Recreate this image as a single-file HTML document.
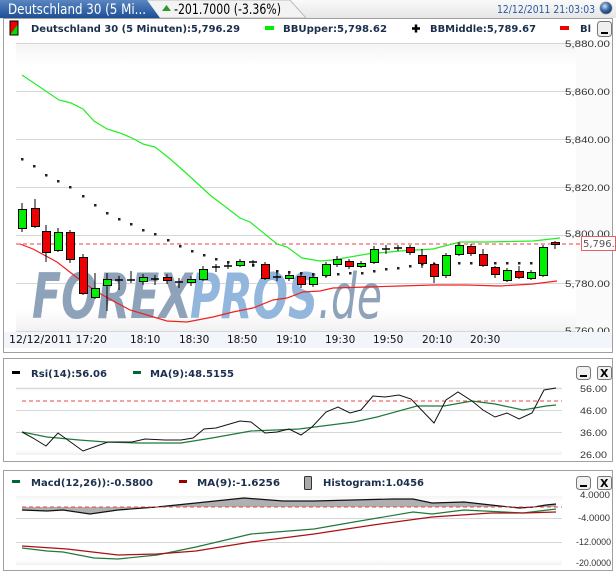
<!DOCTYPE html>
<html><head><meta charset="utf-8"><style>
html,body{margin:0;padding:0;background:#fff;}
svg{display:block;}
text{font-family:"DejaVu Sans","Liberation Sans",sans-serif;}
.lg{font-size:10px;font-weight:bold;fill:#1b2f4d;}
.ax{font-family:"Liberation Sans",sans-serif;font-size:9px;fill:#333;}
.tm{font-family:"DejaVu Sans",sans-serif;font-size:10.5px;fill:#111;}
</style></head><body>
<svg width="616" height="573" viewBox="0 0 616 573" xmlns="http://www.w3.org/2000/svg">
<defs>
<linearGradient id="tab" x1="0" y1="0" x2="0" y2="1"><stop offset="0" stop-color="#5a86c0"/><stop offset="1" stop-color="#1d4f95"/></linearGradient>
<linearGradient id="hdr" x1="0" y1="0" x2="0" y2="1"><stop offset="0" stop-color="#fafafa"/><stop offset="1" stop-color="#e6e6e6"/></linearGradient>
<linearGradient id="plot" x1="0" y1="0" x2="0" y2="1"><stop offset="0" stop-color="#f4f4f4"/><stop offset="0.08" stop-color="#fff"/><stop offset="0.92" stop-color="#fff"/><stop offset="1" stop-color="#f1f1f1"/></linearGradient>
<radialGradient id="glb" cx="0.4" cy="0.35" r="0.6"><stop offset="0" stop-color="#cfe0f5"/><stop offset="0.6" stop-color="#3c6db0"/><stop offset="1" stop-color="#1c3f75"/></radialGradient>
</defs>
<!-- header -->
<rect x="0" y="0" width="616" height="18" fill="url(#hdr)"/>
<path d="M0 0 H290 L306 18 H0Z" fill="#f3f3f3" stroke="#bbb"/>
<path d="M0 0 H147 L160 18 H0Z" fill="url(#tab)"/>
<text x="8" y="14" font-family="Liberation Sans" font-size="14" fill="#fff" textLength="138" lengthAdjust="spacingAndGlyphs">Deutschland 30 (5 Mi...</text>
<path d="M162 11 L166.5 5 L171 11Z" fill="#2a9a2a"/>
<text x="174" y="14" font-family="Liberation Sans" font-size="14" fill="#000" textLength="107" lengthAdjust="spacingAndGlyphs">-201.7000 (-3.36%)</text>
<text x="497" y="13" font-family="Liberation Sans" font-size="11" fill="#2a5aa0" textLength="98" lengthAdjust="spacingAndGlyphs">12/12/2011 21:03:03</text>
<circle cx="606" cy="8" r="6" fill="url(#glb)" stroke="#888" stroke-width="0.7"/>
<!-- main panel -->
<rect x="3.5" y="18.5" width="609" height="334" fill="#fff" stroke="#a0a0a0"/>
<rect x="10" y="21" width="8" height="14" fill="#00dd00" stroke="#000"/>
<path d="M10 21 H18 V24 L10 35Z" fill="#ee0000"/>
<rect x="10" y="21" width="8" height="14" fill="none" stroke="#000"/>
<text x="31" y="32" class="lg" textLength="209" lengthAdjust="spacingAndGlyphs">Deutschland 30 (5 Minuten):5,796.29</text>
<rect x="265" y="26" width="9" height="4" fill="#00ee00"/>
<text x="283" y="32" class="lg" textLength="104" lengthAdjust="spacingAndGlyphs">BBUpper:5,798.62</text>
<path d="M412 28.5 H420 M416 24.5 V32.5" stroke="#000" stroke-width="2.5"/>
<text x="430" y="32" class="lg" textLength="106" lengthAdjust="spacingAndGlyphs">BBMiddle:5,789.67</text>
<rect x="560" y="26" width="9" height="4" fill="#ee0000"/>
<text x="580" y="32" class="lg">Bl</text>
<rect x="597.5" y="21.5" width="14" height="15" rx="3" fill="#f0f0f0" stroke="#777"/>
<rect x="601" y="32" width="7" height="2" fill="#000"/>
<!-- plot area -->
<rect x="16" y="43" width="560" height="289" fill="url(#plot)"/>
<rect x="576" y="40" width="36" height="292" fill="#fafafa"/>
<g stroke="#d6d6d6" stroke-width="1">
<path d="M16 43.5H576M16 91.5H576M16 139.5H576M16 187.5H576M16 235.5H576M16 283.5H576M16 331.5H576"/>
</g>
<g class="ax">
<text x="565" y="47" textLength="45" lengthAdjust="spacingAndGlyphs" class="ax">5,880.00</text>
<text x="565" y="95" textLength="45" lengthAdjust="spacingAndGlyphs" class="ax">5,860.00</text>
<text x="565" y="143" textLength="45" lengthAdjust="spacingAndGlyphs" class="ax">5,840.00</text>
<text x="565" y="191" textLength="45" lengthAdjust="spacingAndGlyphs" class="ax">5,820.00</text>
<text x="565" y="237" textLength="45" lengthAdjust="spacingAndGlyphs" class="ax">5,800.00</text>
<text x="565" y="287" textLength="45" lengthAdjust="spacingAndGlyphs" class="ax">5,780.00</text>
<text x="565" y="334" textLength="45" lengthAdjust="spacingAndGlyphs" class="ax">5,760.00</text>
</g>
<!-- watermark -->
<g font-family="Liberation Sans" font-weight="bold" font-style="italic" font-size="62">
<text x="32" y="318" fill="#8ea2ba" textLength="160" lengthAdjust="spacingAndGlyphs">FOREX</text>
<text x="190" y="318" fill="#93b6dc" textLength="128" lengthAdjust="spacingAndGlyphs">PROS</text>
<text x="318" y="318" fill="#8ea2ba" font-weight="normal" textLength="64" lengthAdjust="spacingAndGlyphs">.de</text>
</g>
<!-- dashed current price -->
<path d="M16 244H581" stroke="#f04040" stroke-width="1" stroke-dasharray="4,3"/>
<rect x="581.5" y="236.5" width="34" height="14" fill="#fff" stroke="#e86060"/>
<text x="583" y="247" font-family="Liberation Sans" font-size="10" fill="#555">5,796.29</text>
<!-- bands -->
<polyline fill="none" stroke="#22ee22" stroke-width="1.2" points="22,75 59,100 71,103 83,109 94,121 107,129 120,133 132,138 143,144 155,147 169,158 185,172 210,195 240,218 250,222 277,244 287,247 302,258 320,261 333,260 367,254 400,251 433,249 460,242 487,242 533,241 560,238"/>
<polyline fill="none" stroke="#ee2222" stroke-width="1.2" points="20,244 33,249 57,262 80,280 97,292 130,310 147,315 167,321 187,322 213,317 233,312 253,308 273,300 287,298 303,292 320,291 333,288 367,287 400,286 433,285 467,285 500,286 533,284 557,281"/>
<!-- middle dots -->
<g fill="#222">
<rect x="21" y="158" width="2.5" height="2.5"/><rect x="33" y="165" width="2.5" height="2.5"/><rect x="45" y="174" width="2.5" height="2.5"/><rect x="57" y="180" width="2.5" height="2.5"/><rect x="69" y="186" width="2.5" height="2.5"/>
<rect x="82" y="195" width="2.5" height="2.5"/><rect x="94" y="204" width="2.5" height="2.5"/><rect x="106" y="212" width="2.5" height="2.5"/><rect x="118" y="218" width="2.5" height="2.5"/><rect x="130" y="223" width="2.5" height="2.5"/>
<rect x="142" y="229" width="2.5" height="2.5"/><rect x="154" y="233" width="2.5" height="2.5"/><rect x="167" y="239" width="2.5" height="2.5"/><rect x="179" y="245" width="2.5" height="2.5"/><rect x="191" y="250" width="2.5" height="2.5"/>
<rect x="203" y="254" width="2.5" height="2.5"/><rect x="215" y="258" width="2.5" height="2.5"/><rect x="227" y="261" width="2.5" height="2.5"/><rect x="240" y="262" width="2.5" height="2.5"/><rect x="252" y="264" width="2.5" height="2.5"/>
<rect x="264" y="268" width="2.5" height="2.5"/><rect x="276" y="270" width="2.5" height="2.5"/><rect x="288" y="271" width="2.5" height="2.5"/><rect x="300" y="272" width="2.5" height="2.5"/><rect x="312" y="273" width="2.5" height="2.5"/>
<rect x="325" y="274" width="2.5" height="2.5"/><rect x="337" y="273" width="2.5" height="2.5"/><rect x="349" y="272" width="2.5" height="2.5"/><rect x="361" y="272" width="2.5" height="2.5"/><rect x="373" y="270" width="2.5" height="2.5"/>
<rect x="385" y="268" width="2.5" height="2.5"/><rect x="397" y="267" width="2.5" height="2.5"/><rect x="409" y="265" width="2.5" height="2.5"/><rect x="421" y="263" width="2.5" height="2.5"/><rect x="433" y="263" width="2.5" height="2.5"/>
<rect x="445" y="263" width="2.5" height="2.5"/><rect x="458" y="262" width="2.5" height="2.5"/><rect x="470" y="262" width="2.5" height="2.5"/><rect x="482" y="262" width="2.5" height="2.5"/><rect x="494" y="262" width="2.5" height="2.5"/>
<rect x="506" y="262" width="2.5" height="2.5"/><rect x="518" y="262" width="2.5" height="2.5"/><rect x="530" y="262" width="2.5" height="2.5"/><rect x="542" y="260" width="2.5" height="2.5"/>
</g>
<!-- candles -->
<g stroke="#000" stroke-width="1">
<path d="M22 203V232M35 199V228M46 225V262M58 228V252M70 230V263M83 254V295M95 273V299M107 273V311M119 276V290M131 271V283M143 274V285M155 275V285M167 274V284M179 278V288M191 276V286M203 266V281M216 264V272M228 263V269M240 259V267M253 260V267M265 262V280M277 270V281M289 273V281M301 273V288M313 274V287M326 262V278M337 256V267M349 259V269M361 261V268M374 246V264M386 245V254M398 245V251M410 245V255M422 249V268M434 262V283M446 253V278M459 242V256M471 244V256M483 249V267M495 266V278M507 268V282M519 266V279M531 270V280M543 245V277M555 241V249"/>
<g fill="#00ee00">
<rect x="18.5" y="209.5" width="8" height="19"/><rect x="54.5" y="232.5" width="8" height="18"/><rect x="91.5" y="288.5" width="8" height="9"/><rect x="103.5" y="279.5" width="8" height="6"/><rect x="139.5" y="277.5" width="8" height="4"/><rect x="187.5" y="279.5" width="8" height="3"/><rect x="199.5" y="269.5" width="8" height="10"/><rect x="236.5" y="261.5" width="8" height="4"/><rect x="285.5" y="275.5" width="8" height="3"/><rect x="309.5" y="277.5" width="8" height="7"/><rect x="322.5" y="264.5" width="8" height="11"/><rect x="333.5" y="259.5" width="8" height="5"/><rect x="357.5" y="263.5" width="8" height="3"/><rect x="370.5" y="249.5" width="8" height="13"/><rect x="442.5" y="255.5" width="8" height="20"/><rect x="455.5" y="245.5" width="8" height="9"/><rect x="503.5" y="270.5" width="8" height="10"/><rect x="527.5" y="272.5" width="8" height="6"/><rect x="539.5" y="247.5" width="8" height="28"/>
</g>
<g fill="#ee0000">
<rect x="31.5" y="208.5" width="8" height="18"/><rect x="42.5" y="231.5" width="8" height="21"/><rect x="66.5" y="232.5" width="8" height="27"/><rect x="79.5" y="257.5" width="8" height="36"/><rect x="163.5" y="277.5" width="8" height="3"/><rect x="261.5" y="264.5" width="8" height="14"/><rect x="297.5" y="276.5" width="8" height="8"/><rect x="345.5" y="261.5" width="8" height="5"/><rect x="406.5" y="247.5" width="8" height="5"/><rect x="418.5" y="255.5" width="8" height="8"/><rect x="430.5" y="264.5" width="8" height="12"/><rect x="467.5" y="246.5" width="8" height="7"/><rect x="479.5" y="254.5" width="8" height="11"/><rect x="491.5" y="267.5" width="8" height="7"/><rect x="515.5" y="271.5" width="8" height="6"/><rect x="551.5" y="242.5" width="8" height="2"/>
</g>
<path d="M115 280H123M127 280H135M151 279H159M175 282H183M212 267H220M224 266H232M249 262H257M273 277H281M382 249H390M394 248H402" stroke-width="1.5"/>
</g>
<!-- time axis -->
<rect x="4" y="332" width="608" height="16" fill="#f2f6fb"/>
<text x="9" y="343" class="tm" textLength="98" lengthAdjust="spacingAndGlyphs">12/12/2011 17:20</text>
<g class="tm">
<text x="130" y="343">18:10</text><text x="179" y="343">18:30</text><text x="227" y="343">18:50</text><text x="276" y="343">19:10</text><text x="325" y="343">19:30</text><text x="373" y="343">19:50</text><text x="422" y="343">20:10</text><text x="470" y="343">20:30</text>
</g>
<!-- RSI panel -->
<rect x="3.5" y="358.5" width="609" height="103" fill="#fff" stroke="#a0a0a0"/>
<rect x="12" y="371" width="8" height="3" fill="#000"/>
<text x="31" y="377" class="lg" textLength="76" lengthAdjust="spacingAndGlyphs">Rsi(14):56.06</text>
<rect x="133" y="371" width="8" height="3" fill="#006633"/>
<text x="150" y="377" class="lg" textLength="84" lengthAdjust="spacingAndGlyphs">MA(9):48.5155</text>
<rect x="576.5" y="366.5" width="14" height="13" rx="3" fill="#f0f0f0" stroke="#777"/><rect x="580" y="375" width="7" height="2" fill="#000"/>
<rect x="597.5" y="366.5" width="14" height="13" rx="2" fill="#f0f0f0" stroke="#777"/>
<text x="600" y="377" font-family="DejaVu Sans" font-weight="bold" font-size="11" fill="#000">X</text>
<rect x="16" y="387" width="546" height="68" fill="url(#plot)"/>
<path d="M16 388.5H562M16 410.5H562M16 432.5H562" stroke="#d6d6d6"/>
<path d="M22 401H562" stroke="#f04040" stroke-dasharray="4,3"/>
<g class="ax"><text x="580" y="392" textLength="27" lengthAdjust="spacingAndGlyphs" class="ax">56.00</text><text x="580" y="414" textLength="27" lengthAdjust="spacingAndGlyphs" class="ax">46.00</text><text x="580" y="436" textLength="27" lengthAdjust="spacingAndGlyphs" class="ax">36.00</text><text x="580" y="458" textLength="27" lengthAdjust="spacingAndGlyphs" class="ax">26.00</text></g>
<polyline fill="none" stroke="#1f7a3a" stroke-width="1.2" points="22,432 47,437 79,440 106,442 138,443 181,443 212,438 251,431 299,429 354,422 377,417 417,406 444,406 472,401 495,404 523,410 546,406 556,405"/>
<polyline fill="none" stroke="#111" stroke-width="1" points="22,432 33,438 46,446 58,433 83,451 108,442 132,442 145,439 165,440 181,440 193,438 204,429 216,428 240,421 251,422 265,433 277,432 289,429 301,435 312,427 326,412 338,407 350,413 361,410 373,396 385,397 399,395 411,399 434,423 446,400 458,392 472,401 483,410 495,417 507,413 519,419 532,413 544,390 556,388"/>
<!-- MACD panel -->
<rect x="3.5" y="470.5" width="609" height="100" fill="#fff" stroke="#a0a0a0"/>
<rect x="12" y="480" width="8" height="3" fill="#006633"/>
<text x="31" y="486" class="lg" textLength="122" lengthAdjust="spacingAndGlyphs">Macd(12,26)):-0.5800</text>
<rect x="179" y="480" width="8" height="3" fill="#990000"/>
<text x="197" y="486" class="lg" textLength="83" lengthAdjust="spacingAndGlyphs">MA(9):-1.6256</text>
<rect x="304.5" y="476.5" width="7" height="13" rx="1" fill="#aaa" stroke="#333"/>
<text x="323" y="486" class="lg" textLength="101" lengthAdjust="spacingAndGlyphs">Histogram:1.0456</text>
<rect x="576.5" y="476.5" width="14" height="13" rx="3" fill="#f0f0f0" stroke="#777"/><rect x="580" y="485" width="7" height="2" fill="#000"/>
<rect x="597.5" y="476.5" width="14" height="13" rx="2" fill="#f0f0f0" stroke="#777"/>
<text x="600" y="487" font-family="DejaVu Sans" font-weight="bold" font-size="11" fill="#000">X</text>
<rect x="16" y="496" width="546" height="69" fill="url(#plot)"/>
<path d="M16 518.5H562M16 542.5H562" stroke="#d6d6d6"/>
<path d="M22 507 L22 510 47,511 63,510 90,514 118,510 157,507 196,503 244,498 283,501 314,501 393,499 413,499 432,503 464,502 491,505 519,508 534,507 546,505 556,504 556,507Z" fill="#b0b0b0"/>
<polyline fill="none" stroke="#111" stroke-width="1.2" points="22,510 47,511 63,510 90,514 118,510 157,507 196,503 244,498 283,501 314,501 393,499 413,499 432,503 464,502 491,505 519,508 534,507 546,505 556,504"/>
<path d="M22 507H562" stroke="#f04040" stroke-dasharray="4,3"/>
<polyline fill="none" stroke="#1f7a3a" stroke-width="1.2" points="22,548 47,551 63,552 94,558 118,559 157,555 196,547 251,534 314,529 354,522 413,512 432,514 464,510 523,513 556,509"/>
<polyline fill="none" stroke="#aa1111" stroke-width="1.2" points="22,546 67,549 118,555 157,554 196,551 251,542 314,534 373,525 432,517 491,513 523,513 556,512"/>
<g class="ax"><text x="580" y="498" textLength="30" lengthAdjust="spacingAndGlyphs" class="ax">4.0000</text><text x="578" y="521" textLength="32" lengthAdjust="spacingAndGlyphs" class="ax">-4.0000</text><text x="576" y="545" textLength="35" lengthAdjust="spacingAndGlyphs" class="ax">-12.0000</text><text x="576" y="566" textLength="35" lengthAdjust="spacingAndGlyphs" class="ax">-20.0000</text></g>
</svg>
</body></html>
